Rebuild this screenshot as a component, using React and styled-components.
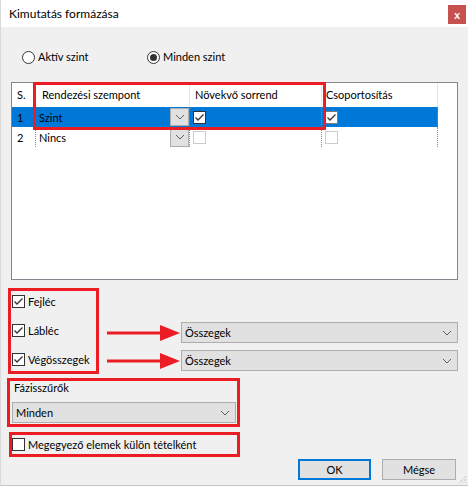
import styled, { createGlobalStyle } from "styled-components";

const RED = "#ec1c24";

const GlobalStyle = createGlobalStyle`
  html, body {
    margin: 0;
    padding: 0;
    background: #ffffff;
  }
  body {
    font-family: Lato, "Noto Sans", sans-serif;
    font-size: 11px;
    color: #000;
  }
`;

const Window = styled.div`
  position: relative;
  width: 468px;
  height: 486px;
  box-sizing: border-box;
  border-left: 1px solid #d9d9d9;
  border-bottom: 1px solid #c4c4c4;
  background: #f0f0f0;
  display: flex;
  flex-direction: column;
`;

const TitleBar = styled.div`
  height: 27px;
  background: #fff;
  display: flex;
  justify-content: space-between;
  align-items: flex-start;
  padding: 0 2px 0 8px;
`;

const Title = styled.div`
  margin-top: 7px;
  line-height: 14px;
  font-size: 12px;
`;

const CloseButton = styled.div`
  margin-top: 5px;
  width: 18px;
  height: 19px;
  background: #c75050;
  color: #fff;
  font-size: 11px;
  font-weight: bold;
  display: flex;
  align-items: center;
  justify-content: center;
`;

const Body = styled.div`
  flex: 1;
  display: flex;
  flex-direction: column;
  padding: 0 10px 0 7px;
`;

const RadioRow = styled.div`
  margin-top: 23px;
  padding-left: 14px;
  height: 14px;
  display: flex;
  align-items: center;
`;

const RadioItem = styled.label`
  width: ${(p) => p.$w}px;
  display: flex;
  align-items: center;
  gap: 3px;
  line-height: 14px;
`;

const RadioCircle = styled.span`
  width: 13px;
  height: 13px;
  box-sizing: border-box;
  border: 1px solid #333;
  border-radius: 50%;
  background: #fff;
  display: flex;
  align-items: center;
  justify-content: center;
  &::after {
    content: "";
    display: ${(p) => (p.$on ? "block" : "none")};
    width: 7px;
    height: 7px;
    border-radius: 50%;
    background: #333;
  }
`;

const GridFrame = styled.div`
  position: relative;
  margin: 18px 0 0 3px;
  height: 198px;
  box-sizing: border-box;
  border: 1px solid #828790;
  background: #fff;
`;

const Grid = styled.div`
  display: grid;
  grid-template-columns: 24px 154px 132px 116px 1fr;
  grid-template-rows: 24px 20px 20px;
`;

const HeadCell = styled.div`
  line-height: 24px;
  padding-left: ${(p) => p.$pad ?? 5}px;
  border-right: ${(p) => (p.$filler ? "none" : "1px solid #e5e5e5")};
  white-space: nowrap;
  overflow: hidden;
`;

const Cell = styled.div`
  box-sizing: border-box;
  height: 20px;
  display: flex;
  align-items: center;
  padding-left: ${(p) => p.$pad ?? 3}px;
  background: ${(p) => (p.$selected ? "#0078d7" : "transparent")};
  border-right: ${(p) => (p.$filler ? "none" : "1px dotted #8a8a8a")};
  border-top: ${(p) => (p.$selected ? "1px dotted #666" : "none")};
  border-bottom: ${(p) => (p.$selected ? "1px dotted #666" : "none")};
  white-space: nowrap;
`;

const CellText = styled.span`
  flex: 1;
`;

const ComboButton = styled.span`
  width: 19px;
  height: 100%;
  box-sizing: border-box;
  background: #e1e1e1;
  border: 1px solid #adadad;
  display: flex;
  align-items: center;
  justify-content: center;
`;

const Annotation = styled.div`
  position: absolute;
  left: 21px;
  top: -1px;
  width: 293px;
  height: 48px;
  box-sizing: border-box;
  border: 3px solid ${RED};
  pointer-events: none;
`;

const OptionsRow = styled.div`
  margin-top: 8px;
  display: flex;
`;

const RedBox = styled.div`
  box-sizing: border-box;
  border: 3px solid ${RED};
  width: ${(p) => p.$w}px;
  height: ${(p) => p.$h}px;
  margin-left: ${(p) => p.$ml ?? 0}px;
  margin-top: ${(p) => p.$mt ?? 0}px;
`;

const CheckGroup = styled(RedBox)`
  display: flex;
  flex-direction: column;
  gap: 8px;
  padding-left: 1px;
`;

const CheckRow = styled.label`
  height: 21px;
  display: flex;
  align-items: center;
  gap: 3px;
  line-height: 14px;
`;

const CheckBoxBox = styled.span`
  flex: none;
  width: 13px;
  height: 13px;
  box-sizing: border-box;
  background: #fff;
  border: 1px solid ${(p) => (p.$disabled ? "#cccccc" : p.$light ? "#7a7a7a" : "#333333")};
  display: flex;
  align-items: center;
  justify-content: center;
`;

const RightCol = styled.div`
  flex: 1;
  margin-left: 8px;
  padding-top: 34px;
  display: flex;
  flex-direction: column;
  gap: 7px;
`;

const ArrowRow = styled.div`
  display: flex;
  align-items: center;
`;

const Combo = styled.div`
  flex: 1;
  height: 21px;
  box-sizing: border-box;
  background: #e1e1e1;
  border: 1px solid #adadad;
  display: flex;
  align-items: center;
  justify-content: space-between;
  padding: 0 5px 0 3px;
  margin-top: ${(p) => p.$mt ?? 0}px;
`;

const FilterBox = styled(RedBox)`
  display: flex;
  flex-direction: column;
  padding: 0 1px 1px 2px;
`;

const FilterLabel = styled.div`
  line-height: 14px;
  padding-left: 2px;
`;

const SingleCheckBox = styled(RedBox)`
  display: flex;
  align-items: center;
  gap: 3px;
`;

const ButtonRow = styled.div`
  margin-top: 2px;
  display: flex;
  justify-content: flex-end;
  gap: 11px;
  padding-right: 2px;
`;

const Button = styled.button`
  width: ${(p) => p.$w}px;
  height: 21px;
  box-sizing: border-box;
  padding: 0;
  background: #e1e1e1;
  border: ${(p) => (p.$default ? "2px solid #0078d7" : "1px solid #adadad")};
  font: inherit;
  color: #000;
`;

const Grip = styled.svg`
  position: absolute;
  right: 1px;
  bottom: 1px;
`;

const Chevron = () => (
  <svg width="10" height="6" viewBox="0 0 10 6">
    <path d="M1 1 L5 5 L9 1" fill="none" stroke="#606060" strokeWidth="1" />
  </svg>
);

const CheckBox = ({ checked, disabled, light }) => (
  <CheckBoxBox $disabled={disabled} $light={light}>
    {checked && (
      <svg width="11" height="11" viewBox="0 0 11 11">
        <path d="M1.5 5.5 L4 8 L9.5 2.5" fill="none" stroke="#333" strokeWidth="1.3" />
      </svg>
    )}
  </CheckBoxBox>
);

const Arrow = () => (
  <svg width="74" height="20" viewBox="0 0 74 20">
    <line x1="0" y1="10" x2="56" y2="10" stroke={RED} strokeWidth="3" />
    <polygon points="53,2 73,10 53,18" fill={RED} />
  </svg>
);

const rows = [
  { n: "1", name: "Szint", selected: true, sort: true, group: true },
  { n: "2", name: "Nincs", selected: false, sort: false, group: false },
];

const App = () => {
  return (
    <>
      <GlobalStyle />
      <Window>
        <TitleBar>
          <Title>Kimutatás formázása</Title>
          <CloseButton>x</CloseButton>
        </TitleBar>
        <Body>
          <RadioRow>
            <RadioItem $w={125}>
              <RadioCircle />
              Aktív szint
            </RadioItem>
            <RadioItem $w={100}>
              <RadioCircle $on />
              Minden szint
            </RadioItem>
          </RadioRow>

          <GridFrame>
            <Grid>
              <HeadCell>S.</HeadCell>
              <HeadCell $pad={6}>Rendezési szempont</HeadCell>
              <HeadCell>Növekvő sorrend</HeadCell>
              <HeadCell $pad={4}>Csoportosítás</HeadCell>
              <HeadCell $filler />
              {rows.map((r) => [
                <Cell key={r.n + "n"} $selected={r.selected} $pad={5}>
                  {r.n}
                </Cell>,
                <Cell key={r.n + "c"} $selected={r.selected}>
                  <CellText>{r.name}</CellText>
                  <ComboButton>
                    <Chevron />
                  </ComboButton>
                </Cell>,
                <Cell key={r.n + "s"} $selected={r.selected}>
                  <CheckBox checked={r.sort} disabled={!r.selected} />
                </Cell>,
                <Cell key={r.n + "g"} $selected={r.selected} $pad={3}>
                  <CheckBox checked={r.group} disabled={!r.selected} light />
                </Cell>,
                <Cell key={r.n + "f"} $filler />,
              ])}
            </Grid>
            <Annotation />
          </GridFrame>

          <OptionsRow>
            <CheckGroup $w={91} $h={86}>
              <CheckRow>
                <CheckBox checked />
                Fejléc
              </CheckRow>
              <CheckRow>
                <CheckBox checked />
                Lábléc
              </CheckRow>
              <CheckRow>
                <CheckBox checked />
                Végösszegek
              </CheckRow>
            </CheckGroup>
            <RightCol>
              <ArrowRow>
                <Arrow />
                <Combo>
                  Összegek
                  <Chevron />
                </Combo>
              </ArrowRow>
              <ArrowRow>
                <Arrow />
                <Combo>
                  Összegek
                  <Chevron />
                </Combo>
              </ArrowRow>
            </RightCol>
          </OptionsRow>

          <FilterBox $w={233} $h={49} $ml={-1} $mt={4}>
            <FilterLabel>Fázisszűrők</FilterLabel>
            <Combo $mt={7}>
              Minden
              <Chevron />
            </Combo>
          </FilterBox>

          <SingleCheckBox $w={231} $h={25} $ml={1} $mt={5}>
            <CheckBox />
            Megegyező elemek külön tételként
          </SingleCheckBox>

          <ButtonRow>
            <Button $w={73} $default>
              OK
            </Button>
            <Button $w={74}>Mégse</Button>
          </ButtonRow>
        </Body>
        <Grip width="10" height="10" viewBox="0 0 10 10">
          <path d="M9 2 L2 9 M9 5 L5 9 M9 8 L8 9" stroke="#b0b0b0" strokeWidth="1" strokeDasharray="1 1" />
        </Grip>
      </Window>
    </>
  );
};

export default App;
